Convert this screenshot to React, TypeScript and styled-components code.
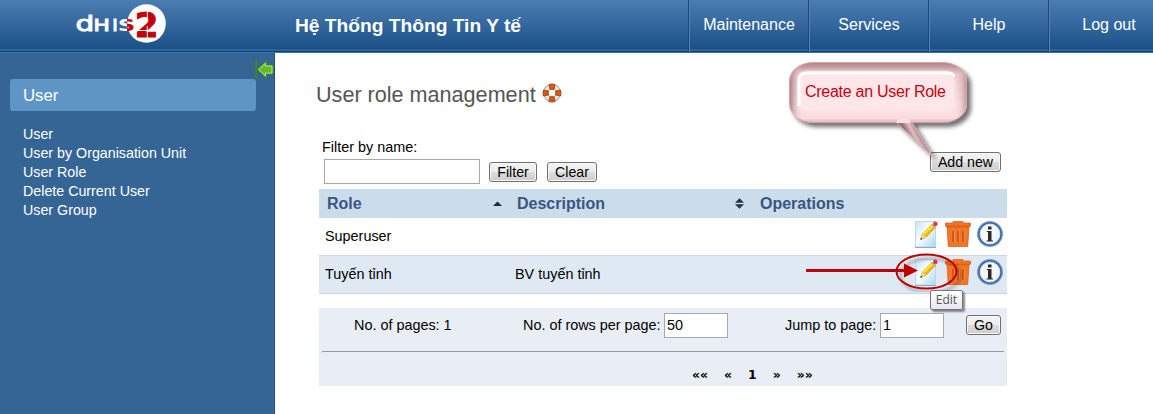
import React from 'react';
import styled, { createGlobalStyle } from 'styled-components';

const GlobalStyle = createGlobalStyle`
  * { box-sizing: border-box; }
  body { margin: 0; background: #fff; overflow: hidden; }
  body, button, input { font-family: "Liberation Sans", Arial, sans-serif; font-size: 14.4px; color: #000; }
`;

const Page = styled.div`
  width: 1153px;
  height: 414px;
  display: flex;
  flex-direction: column;
  position: relative;
  overflow: hidden;
`;

const Header = styled.header`
  flex: none;
  height: 53px;
  display: flex;
  overflow: hidden;
  background:
    linear-gradient(#1c4c80, #1c4c80) 0 48px / 100% 1px no-repeat,
    linear-gradient(#2c659d, #2c659d) 0 49px / 100% 2px no-repeat,
    linear-gradient(#0b426f, #0b426f) 0 51px / 100% 1px no-repeat,
    linear-gradient(#3f75ab, #3f75ab) 0 52px / 100% 1px no-repeat,
    linear-gradient(#4a7db2, #1d5289 48px);
`;

const LogoArea = styled.div`
  width: 295px;
  flex: none;
  padding-left: 70px;
  svg { display: block; }
`;

const SystemName = styled.div`
  width: 393px;
  flex: none;
  color: #fff;
  font-size: 19.2px;
  font-weight: bold;
  line-height: 51px;
  white-space: nowrap;
`;

const Nav = styled.nav`
  display: flex;
  flex: none;
`;

const NavItem = styled.a`
  width: 120px;
  height: 53px;
  padding-left: 1px;
  border-left: 1px solid #1c4777;
  box-shadow: inset 1px 0 #5384b6;
  color: #fff;
  font-size: 16px;
  line-height: 50px;
  text-align: center;
`;

const Body = styled.div`
  flex: 1;
  display: flex;
`;

const Sidebar = styled.aside`
  width: 275px;
  flex: none;
  background: #356595;
  border-right: 1px solid #234f80;
  padding: 7px 0 0 10px;
`;

const Collapse = styled.div`
  height: 19px;
  display: flex;
  justify-content: flex-end;
`;

const MenuTitle = styled.h2`
  margin: 0 0 14px;
  width: 246px;
  height: 32px;
  padding-left: 13px;
  background: #5e95c4;
  border-radius: 3px;
  color: #fff;
  font-size: 16.8px;
  font-weight: normal;
  line-height: 33px;
`;

const MenuLink = styled.a`
  display: block;
  padding-left: 13px;
  color: #fff;
  font-size: 14.25px;
  line-height: 19px;
`;

const Main = styled.main`
  padding: 28px 0 0 41px;
`;

const Title = styled.h1`
  display: flex;
  align-items: center;
  gap: 6px;
  margin: 0;
  height: 26px;
  color: #555;
  font-size: 21.6px;
  font-weight: normal;
  line-height: 27px;
  svg { margin-top: -3px; }
`;

const Toolbar = styled.div`
  display: flex;
  justify-content: space-between;
  width: 685px;
  height: 82px;
  padding: 31px 0 0 6px;
`;

const FilterBlock = styled.div`
  line-height: 18px;
`;

const FilterRow = styled.div`
  display: flex;
  align-items: center;
  gap: 10px;
  padding: 3px 0 0 2px;
`;

const Field = styled.input<{ $w: number }>`
  width: ${p => p.$w}px;
  height: 25px;
  padding: 0 2px;
  border: 1px solid #a5a8ae;
  background: #fff;
  outline: 0;
`;

const Button = styled.button<{ $w: number; $top?: number }>`
  width: ${p => p.$w}px;
  height: 20px;
  margin: ${p => p.$top || 0}px 0 0;
  padding: 0;
  border: 1px solid #707070;
  border-radius: 3px;
  background: linear-gradient(#f3f3f3, #ebebeb 50%, #dddddd 50%, #cdcdcd);
  box-shadow: inset 0 0 0 1px #f8f8f8;
  font-size: 14.2px;
  line-height: 18px;
  white-space: nowrap;
`;

const FilterButton = styled(Button)`
  &:first-of-type { margin-left: -1px; }
`;

const Table = styled.div`
  width: 688px;
  margin-left: 3px;
`;

const Row = styled.div<{ $alt?: boolean }>`
  display: grid;
  grid-template-columns: 190px 243px 1fr;
  height: 38px;
  border-bottom: 1px solid #c9d5e2;
  background: ${p => (p.$alt ? '#dfe9f3' : '#fff')};
`;

const HeadRow = styled(Row)`
  height: 29px;
  border: 0;
  background: #cbddeb;
`;

const HeadCell = styled.div`
  display: flex;
  align-items: center;
  justify-content: space-between;
  padding: 0 7px 0 8px;
  color: #3a5582;
  font-size: 16px;
  font-weight: bold;
  &:nth-child(2) { padding-right: 8px; }
`;

const Cell = styled.div`
  padding-left: 6px;
  line-height: 37px;
`;

const Operations = styled.div`
  display: flex;
  justify-content: flex-end;
  gap: 6px;
  padding: 2px 4px 0 0;
`;

const Pager = styled.div`
  width: 688px;
  height: 78px;
  margin: 14px 0 0 3px;
  padding: 5px 3px 0;
  background: #e9eef6;
`;

const PagerTop = styled.div`
  display: flex;
  align-items: flex-start;
  height: 25px;
  padding: 0 3px 0 32px;
  line-height: 24px;
  white-space: nowrap;
`;

const PageField = styled(Field)`
  padding-bottom: 2px;
`;

const PagerLabel = styled.label<{ $w: number }>`
  width: ${p => p.$w}px;
  flex: none;
`;

const Spacer = styled.span<{ $w: number }>`
  width: ${p => p.$w}px;
  flex: none;
`;

const Rule = styled.hr`
  height: 2px;
  margin: 13px 0 13px;
  border: 0;
  border-top: 1px solid #9a9a9a;
  border-left: 1px solid #9a9a9a;
  border-bottom: 1px solid #eef0f4;
`;

const Pages = styled.div`
  display: flex;
  gap: 16px;
  padding-left: 370px;
  font-family: "DejaVu Sans", sans-serif;
  font-size: 12.4px;
  font-weight: bold;
  line-height: 17px;
`;

const Callout = styled.div`
  position: absolute;
  left: 780px;
  top: 55px;
  width: 200px;
  height: 110px;
  svg { display: block; }
`;

const CalloutText = styled.span`
  position: absolute;
  left: 25px;
  top: 28px;
  color: #c8000c;
  font-size: 16px;
  letter-spacing: -0.27px;
  line-height: 18px;
  white-space: nowrap;
`;

const Highlight = styled.svg`
  position: absolute;
  left: 800px;
  top: 245px;
`;

const Tooltip = styled.div`
  position: absolute;
  left: 930px;
  top: 290px;
  width: 33px;
  height: 20px;
  border: 1px solid #767676;
  border-radius: 2px;
  background: linear-gradient(#fff, #e5e6f1);
  box-shadow: 2px 2px 2px rgba(0, 0, 0, 0.45);
  color: #555;
  font-family: "Open Sans", sans-serif;
  font-size: 12px;
  line-height: 18px;
  text-align: center;
`;

const Logo = () => (
  <svg width="110" height="48" viewBox="70 0 110 48">
    <defs>
      <linearGradient id="overlap" gradientUnits="userSpaceOnUse" x1="0" x2="12">
        <stop offset=".52" stopColor="#fff" />
        <stop offset=".52" stopColor="#c40008" />
      </linearGradient>
    </defs>
    <circle cx="146.5" cy="23.5" r="19.3" fill="#fff" />
    <g fontFamily="DejaVu Sans" fill="#fff" stroke="#fff" strokeWidth=".9">
      <text transform="translate(75.500 31) scale(1.350 1)" fontSize="22">d</text>
      <text transform="translate(93.500 31) scale(1.400 1)" fontSize="15.500">H</text>
      <text transform="translate(112.300 31) scale(1.200 1)" fontSize="15.500">I</text>
    </g>
    <g fontFamily="DejaVu Sans" fontWeight="bold">
      <text transform="translate(117.800 31.200) scale(1.520 1)" fontSize="16" fill="url(#overlap)">S</text>
      <text transform="translate(134.800 36.600)" fontSize="34" fill="#c40008" stroke="#c40008">2</text>
    </g>
    <path d="M147.300 9v12M147.300 26v12M136 30.500h22" stroke="#fff" strokeWidth="1" />
  </svg>
);

const CollapseIcon = () => (
  <svg width="19" height="20" viewBox="0 0 19 20">
    <path d="M1.200 0v19" stroke="#4f811c" strokeWidth="1.900" />
    <path d="M2 9.500L11.500 1v4H18v9h-6.500v4z" fill="#65bb25" stroke="#42831e" />
    <path d="M3.500 9.500L10.500 3.300V6H17v7h-6.500v3z" fill="#65bb25" stroke="#b4df95" />
  </svg>
);

const HelpIcon = () => (
  <svg width="20" height="20" viewBox="0 0 20 20">
    <circle cx="10" cy="10" r="6.300" fill="none" stroke="#999" strokeWidth="5.500" />
    <circle cx="10" cy="10" r="6.300" fill="none" stroke="#e6e6e6" strokeWidth="4" />
    <path d="M7 1.500q3-1 6 0l-1 5q-2-1-4 0zM7 18.500q3 1 6 0l-1-5q-2 1-4 0zM1.500 7q-1 3 0 6l5-1q-1-2 0-4zM18.500 7q1 3 0 6l-5-1q1-2 0-4z" fill="#de590f" stroke="#a9400d" strokeWidth=".9" />
  </svg>
);

const EditIcon = () => (
  <svg width="26" height="30" viewBox="0 0 26 30">
    <defs>
      <linearGradient id="sheet" x2="1" y2="1">
        <stop stopColor="#c4e4fa" />
        <stop offset=".45" stopColor="#fafdff" />
        <stop offset="1" stopColor="#a9d6f5" />
      </linearGradient>
    </defs>
    <path d="M2.500 1.500H22.500v25.500H2.500z" fill="url(#sheet)" stroke="#b8d9f0" />
    <path d="M2 27.500h21" stroke="#82add0" />
    <path d="M7.500 19.500l2-5.500L19 4l3.500 3.300-9.500 10z" fill="#f1b70b" stroke="#c99a1d" strokeWidth=".7" />
    <path d="M10.500 14.500L20 4.800" stroke="#ffe23b" strokeWidth="2.400" />
    <path d="M7.500 19.500l1.900-5.300 3.300 3z" fill="#efd6a4" />
    <path d="M7.300 19.700l.8-2 1.300 1.300z" fill="#222" />
    <path d="M18.700 4.300l3.500 3.300" stroke="#aabcc9" strokeWidth="1.800" />
    <circle cx="22.300" cy="3.900" r="2.300" fill="#e73b35" />
  </svg>
);

const TrashIcon = () => (
  <svg width="26" height="30" viewBox="0 0 26 30">
    <path d="M.5 6V3H8V1.500h10V3h7.500v3z" fill="#ef7424" stroke="#df6220" strokeWidth=".8" />
    <path d="M2 7h22l-1.300 19.500H3.300z" fill="#f17726" stroke="#dc6120" strokeWidth=".8" />
    <path d="M8 11v11M13 11v11M18 11v11" stroke="#cf5420" strokeWidth="1.800" />
    <path d="M9.500 11v11M14.500 11v11M19.500 11v11" stroke="#fa9146" strokeWidth=".7" />
    <path d="M1 6.500h24" stroke="#d95f20" />
  </svg>
);

const InfoIcon = () => (
  <svg width="26" height="30" viewBox="0 0 26 30">
    <circle cx="13" cy="14" r="11.500" fill="#f4f6f8" stroke="#3768a8" strokeWidth="2.500" />
    <circle cx="13" cy="14" r="12.400" fill="none" stroke="#8caace" strokeWidth=".8" />
    <circle cx="13" cy="14" r="9.800" fill="none" stroke="#cbd8e8" strokeWidth=".8" />
    <path d="M11 6.500h3.500v3H11zM9.800 11h4.700v9.500H16v1H9.500v-1H11V12H9.800z" fill="#27292c" />
  </svg>
);

const SortAsc = () => (
  <svg width="9" height="5" viewBox="0 0 9 5"><path d="M0 5l4.500-4.500L9 5z" fill="#1d2b3b" /></svg>
);

const SortBoth = () => (
  <svg width="9" height="11" viewBox="0 0 9 11"><path d="M0 4.800L4.500.3 9 4.800zM0 6.200h9l-4.500 4.500z" fill="#263441" /></svg>
);

const RowOperations = () => (
  <Operations><EditIcon /><TrashIcon /><InfoIcon /></Operations>
);

const menu = ['User', 'User by Organisation Unit', 'User Role', 'Delete Current User', 'User Group'];
const nav = ['Maintenance', 'Services', 'Help', 'Log out'];
const roles = [
  { role: 'Superuser', description: '' },
  { role: 'Tuyến tỉnh', description: 'BV tuyến tỉnh' },
];

export default function App() {
  return (
    <Page>
      <GlobalStyle />
      <Header>
        <LogoArea><Logo /></LogoArea>
        <SystemName>Hệ Thống Thông Tin Y tế</SystemName>
        <Nav>{nav.map(item => <NavItem key={item}>{item}</NavItem>)}</Nav>
      </Header>
      <Body>
        <Sidebar>
          <Collapse><CollapseIcon /></Collapse>
          <MenuTitle>User</MenuTitle>
          {menu.map(item => <MenuLink key={item}>{item}</MenuLink>)}
        </Sidebar>
        <Main>
          <Title>User role management <HelpIcon /></Title>
          <Toolbar>
            <FilterBlock>
              <div>Filter by name:</div>
              <FilterRow>
                <Field $w={156} aria-label="Filter by name" />
                <FilterButton $w={48}>Filter</FilterButton>
                <Button $w={50}>Clear</Button>
              </FilterRow>
            </FilterBlock>
            <Button $w={71} $top={14}>Add new</Button>
          </Toolbar>
          <Table>
            <HeadRow>
              <HeadCell>Role<SortAsc /></HeadCell>
              <HeadCell>Description<SortBoth /></HeadCell>
              <HeadCell>Operations</HeadCell>
            </HeadRow>
            {roles.map((r, i) => (
              <Row key={r.role} $alt={i % 2 === 1}>
                <Cell>{r.role}</Cell>
                <Cell>{r.description}</Cell>
                <RowOperations />
              </Row>
            ))}
          </Table>
          <Pager>
            <PagerTop>
              <PagerLabel $w={169}>No. of pages: 1</PagerLabel>
              <PagerLabel $w={141}>No. of rows per page:</PagerLabel>
              <PageField $w={64} defaultValue="50" />
              <Spacer $w={57} />
              <PagerLabel $w={95}>Jump to page:</PagerLabel>
              <PageField $w={64} defaultValue="1" />
              <Spacer $w={22} />
              <Button $w={35} $top={2}>Go</Button>
            </PagerTop>
            <Rule />
            <Pages><span>««</span><span>«</span><span>1</span><span>»</span><span>»»</span></Pages>
          </Pager>
        </Main>
      </Body>
      <Callout>
        <svg width="200" height="110" viewBox="0 0 200 110">
          <defs>
            <linearGradient id="bubble" x2="0" y2="1">
              <stop stopColor="#ad8388" />
              <stop offset=".2" stopColor="#ecc8cb" />
              <stop offset=".75" stopColor="#fbe0e2" />
              <stop offset=".93" stopColor="#f9dcdf" />
              <stop offset="1" stopColor="#dfb5ba" />
            </linearGradient>
            <linearGradient id="sides">
              <stop stopColor="#9b7076" stopOpacity=".8" />
              <stop offset=".07" stopColor="#f5d7da" stopOpacity="0" />
              <stop offset=".94" stopColor="#f5d7da" stopOpacity="0" />
              <stop offset="1" stopColor="#a2747b" stopOpacity=".6" />
            </linearGradient>
            <linearGradient id="tail" gradientUnits="userSpaceOnUse" x1="128" y1="84" x2="141" y2="77">
              <stop offset=".1" stopColor="#8f6b70" />
              <stop offset=".5" stopColor="#e3bcc1" />
              <stop offset="1" stopColor="#957378" />
            </linearGradient>
            <filter id="shade" x="-10%" y="-10%" width="130%" height="130%">
              <feDropShadow dx="4" dy="4" stdDeviation="2" floodOpacity=".55" />
            </filter>
            <filter id="soften"><feGaussianBlur stdDeviation="1.500" /></filter>
          </defs>
          <g filter="url(#shade)">
            <path d="M115 66L153 102 131 66z" fill="url(#tail)" stroke="#dba9af" />
            <rect x="9.500" y="7.500" width="177" height="60" rx="24" ry="18" fill="url(#bubble)" stroke="#d9a1a8" />
          </g>
          <rect x="10" y="8" width="176" height="59" rx="24" ry="18" fill="url(#sides)" />
          <path d="M116 67q5-5 7-9 3 5 8 9l-1 1H117z" fill="#f9dee0" />
          <rect x="18" y="16" width="157" height="40" rx="8" fill="#ffe7e9" filter="url(#soften)" />
          <path d="M19 51V25q0-7 8-7h140q5 0 7 3" fill="none" stroke="#fff" strokeWidth="3" />
        </svg>
        <CalloutText>Create an User Role</CalloutText>
      </Callout>
      <Highlight width="165" height="58" viewBox="0 0 165 58">
        <defs><filter id="ring"><feDropShadow dx="4" dy="4" stdDeviation="1.500" floodOpacity=".3" /></filter></defs>
        <ellipse cx="126.500" cy="26.500" rx="30" ry="17" fill="none" stroke="#c00000" strokeWidth="2" filter="url(#ring)" />
        <path d="M6 25.500h100" stroke="#c00000" strokeWidth="3" />
        <path d="M104 18.500l14 7-14 7z" fill="#c00000" />
      </Highlight>
      <Tooltip>Edit</Tooltip>
    </Page>
  );
}
